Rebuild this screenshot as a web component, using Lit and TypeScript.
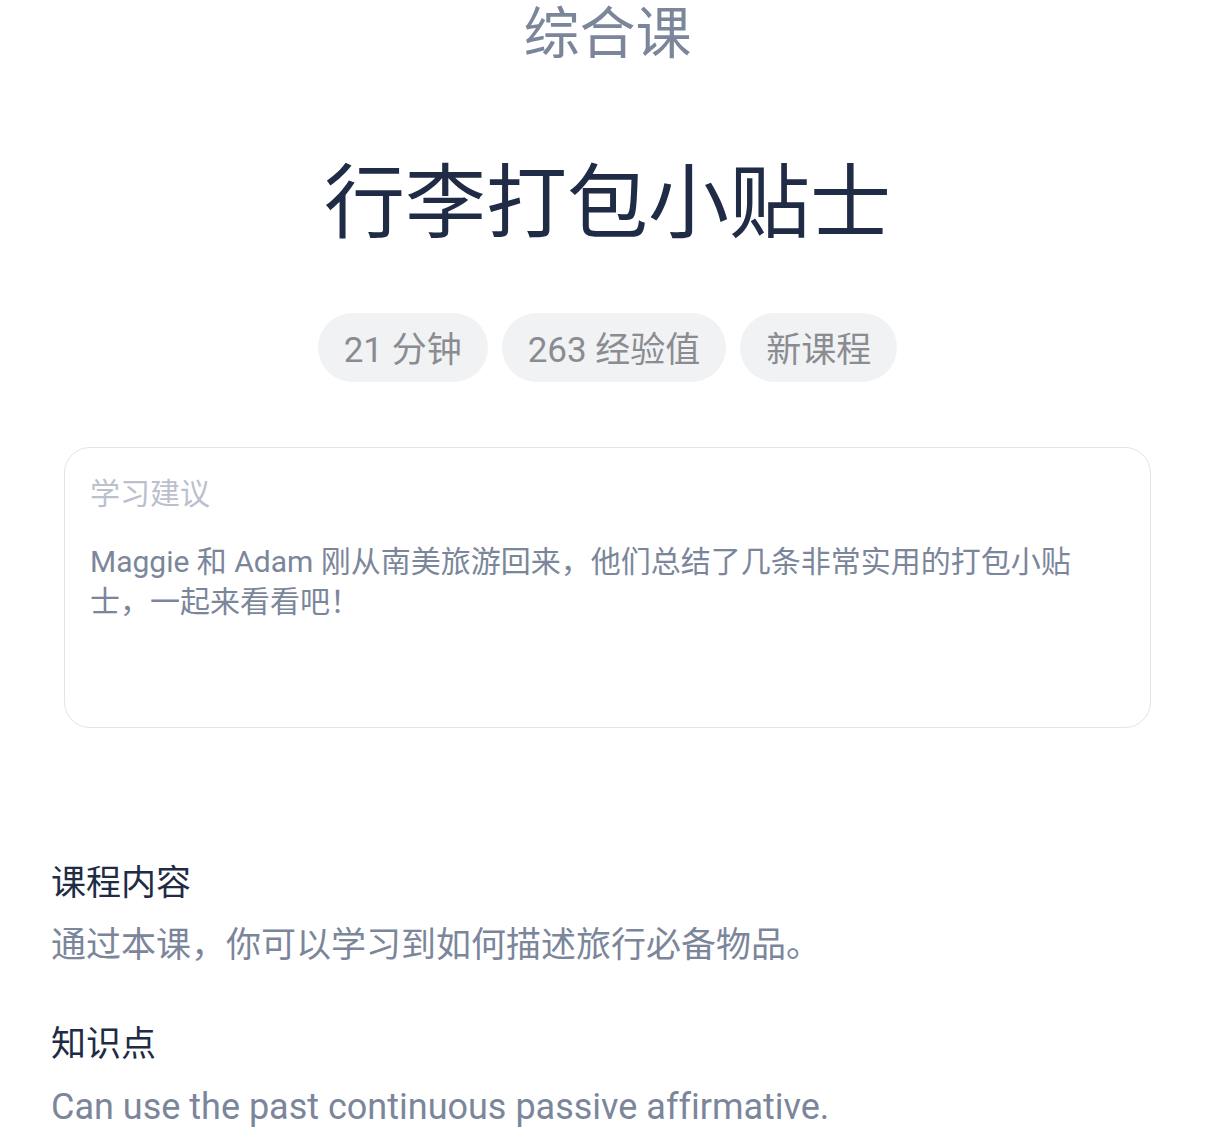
import { LitElement, html, css } from "lit";
import { customElement } from "lit/decorators.js";

@customElement("app-root")
export class AppRoot extends LitElement {
  static styles = css`
    :host {
      display: block;
      background: #fff;
      color: #7b869b;
      font-family: Roboto, "Noto Sans CJK SC", sans-serif;
      font-variant-ligatures: none;
    }
    * { box-sizing: border-box; margin: 0; padding: 0; font-weight: 400; }
    .header { display: flex; flex-direction: column; align-items: center; }
    .kind { font-size: 56px; line-height: 68px; }
    .title { margin-top: 88px; font-size: 81px; line-height: 96px; color: #202b45; }
    .tags { display: flex; gap: 14px; margin-top: 61px; list-style: none; }
    .tag {
      padding: 6px 26px 0;
      border-radius: 35px;
      background: #f1f2f4;
      color: #8a8c91;
      font-size: 35px;
      line-height: 63px;
    }
    .advice {
      margin: 65px 64px 0;
      padding: 26px 25px 25px;
      min-height: 281px;
      border: 1px solid #e1e5eb;
      border-radius: 26px;
    }
    .advice-title { font-size: 30px; line-height: 40px; color: #bbc0cd; }
    .advice-text { margin-top: 28px; font-size: 30px; line-height: 40px; }
    .details { display: grid; gap: 47px; padding: 130px 51px 0; }
    .detail-title { font-size: 35px; line-height: 52px; color: #202b45; }
    .detail-text { margin-top: 10px; font-size: 35px; line-height: 52px; }
    .detail-text:lang(en) { font-size: 36px; }
  `;

  private tags = ["21 分钟", "263 经验值", "新课程"];

  private details = [
    { title: "课程内容", lang: "zh-CN", text: "通过本课，你可以学习到如何描述旅行必备物品。" },
    { title: "知识点", lang: "en", text: "Can use the past continuous passive affirmative." },
  ];

  render() {
    return html`
      <main lang="zh-CN">
        <header class="header">
          <p class="kind">综合课</p>
          <h1 class="title">行李打包小贴士</h1>
          <ul class="tags">
            ${this.tags.map((tag) => html`<li class="tag">${tag}</li>`)}
          </ul>
        </header>
        <section class="advice">
          <h2 class="advice-title">学习建议</h2>
          <p class="advice-text">Maggie 和 Adam 刚从南美旅游回来，他们总结了几条非常实用的打包小贴士，一起来看看吧！</p>
        </section>
        <div class="details">
          ${this.details.map(
            (item) => html`
              <section>
                <h2 class="detail-title">${item.title}</h2>
                <p class="detail-text" lang=${item.lang}>${item.text}</p>
              </section>
            `
          )}
        </div>
      </main>
    `;
  }
}
